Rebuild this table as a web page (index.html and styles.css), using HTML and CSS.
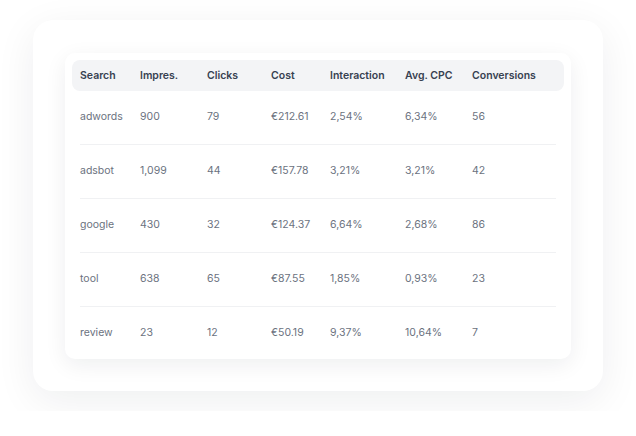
FILE: index.html
```html
<!DOCTYPE html>
<html>
<head>
<meta charset="utf-8">
<link rel="stylesheet" href="styles.css">
</head>
<body>
<div class="outer">
  <div class="card">
    <div class="row head">
      <div>Search</div><div>Impres.</div><div>Clicks</div><div>Cost</div><div>Interaction</div><div>Avg. CPC</div><div>Conversions</div>
    </div>
    <div class="row">
      <div>adwords</div><div>900</div><div>79</div><div>€212.61</div><div>2,54%</div><div>6,34%</div><div>56</div>
    </div>
    <div class="row">
      <div>adsbot</div><div>1,099</div><div>44</div><div>€157.78</div><div>3,21%</div><div>3,21%</div><div>42</div>
    </div>
    <div class="row">
      <div>google</div><div>430</div><div>32</div><div>€124.37</div><div>6,64%</div><div>2,68%</div><div>86</div>
    </div>
    <div class="row">
      <div>tool</div><div>638</div><div>65</div><div>€87.55</div><div>1,85%</div><div>0,93%</div><div>23</div>
    </div>
    <div class="row last">
      <div>review</div><div>23</div><div>12</div><div>€50.19</div><div>9,37%</div><div>10,64%</div><div>7</div>
    </div>
  </div>
</div>
</body>
</html>
```
FILE: styles.css
```css
html, body {
  margin: 0;
  padding: 0;
  background: #ffffff;
}
body {
  padding: 20px 33px;
  font-family: Inter, "Noto Sans", sans-serif;
  font-size: 10.5px;
}
.outer {
  width: 570px;
  height: 371px;
  box-sizing: border-box;
  background: #ffffff;
  border-radius: 20px;
  box-shadow: 0 10px 40px rgba(20, 24, 40, 0.07);
  padding: 33px 32px;
}
.card {
  width: 506px;
  box-sizing: border-box;
  background: #ffffff;
  border-radius: 10px;
  box-shadow: 0 6px 22px rgba(20, 24, 40, 0.07);
  padding: 7px 7px 0 7px;
}
.row {
  display: grid;
  grid-template-columns: 60px 67px 64px 59px 75px 67px 1fr;
  align-items: center;
  height: 54px;
  box-sizing: border-box;
  padding-bottom: 3px;
  margin: 0 8px;
  border-bottom: 1px solid #f0f1f3;
  color: #6b7280;
  font-weight: 400;
}
.row.last {
  height: 52px;
  padding-bottom: 2px;
  border-bottom: none;
}
.row.head {
  height: 31px;
  margin: 0;
  padding: 0 8px;
  background: #f3f4f6;
  border-radius: 8px;
  border-bottom: none;
  color: #374151;
  font-weight: 600;
}
```
